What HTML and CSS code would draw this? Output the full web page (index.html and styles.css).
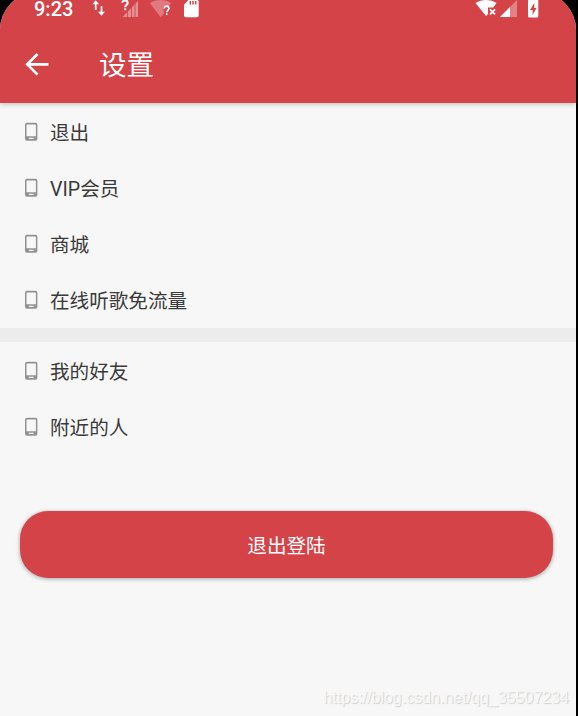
FILE: index.html
```html
<!DOCTYPE html>
<html lang="zh-CN">
<head>
<meta charset="utf-8">
<title>设置</title>
<link rel="stylesheet" href="styles.css">
</head>
<body>
<svg class="defs" width="0" height="0" aria-hidden="true">
  <symbol id="phone" viewBox="0 0 14 20">
    <path fill="#929292" fill-rule="evenodd" d="M3 .7h8.400a2 2 0 0 1 2 2v14a2 2 0 0 1-2 2H3a2 2 0 0 1-2-2v-14a2 2 0 0 1 2-2zM3.300 2.400a.8.8 0 0 0-.8.800V14.200h9.400V3.200a.8.8 0 0 0-.8-.8zM4.800 15.700v1.200h4.800v-1.200z"/>
  </symbol>
</svg>
<div class="screen">
  <header class="top">
    <div class="status">
      <span class="clock">9:23</span>
      <svg class="status-icons" width="490" height="22" viewBox="80 0 490 22">
        <g stroke="#fff" stroke-width="1.700" fill="none">
          <path d="M95.700 10V2M101.500 6v8"/>
        </g>
        <path fill="#fff" d="M92.300 4.300L95.700.3l3.400 4zM98 11.700h7l-3.500 4z"/>
        <path fill="#e48f93" d="M122.500 17L138 1v16z"/>
        <path stroke="#d34348" stroke-width=".8" d="M127.500 9v8M131.500 6v11M135 3v14"/>
        <path fill="#d34348" d="M120 0h9v10h-9z"/>
        <path d="M122.300 2.800c0-3.200 5.400-3.200 5.400.1 0 2-2.500 2-2.500 4.300M125.200 8.300v1.900" stroke="#fff" stroke-width="2" fill="none"/>
        <path fill="#e07a7e" d="M150 3.200C155-1 166-1 171 3.200L168.800 6h-5v8l-3.300 3z"/>
        <path d="M164.400 8.400c0-3 4.500-3 4.500.1 0 1.800-2.200 1.800-2.200 3.800M166.700 13.300v1.800" stroke="#fff" stroke-width="1.600" fill="none"/>
        <path fill="#fff" d="M188.500 0H197a1.700 1.700 0 0 1 1.700 1.700v13.800a1.700 1.700 0 0 1-1.700 1.700h-11.300a1.700 1.700 0 0 1-1.700-1.700V4.500z"/>
        <path stroke="#d34348" stroke-width="1.500" d="M190.300 1v3.600M193 1v3.600M195.700 1v3.600"/>
        <path fill="#fff" d="M475.500 3C481-1 491-1 496.500 3l-3.300 4.500H488V14l-2 2z"/>
        <path stroke="#fff" stroke-width="1.700" d="M490 9.300l5 5M495 9.300l-5 5"/>
        <path fill="#e38286" d="M500 17L517 0v17z"/>
        <path fill="#fff" d="M500 17l10-10v10z"/>
        <path fill="#fff" d="M528 0h10.300v16a1.500 1.500 0 0 1-1.500 1.500h-7.300A1.500 1.500 0 0 1 528 16z"/>
        <path fill="#d34348" d="M534.300 3L530 10h2.600v5L536.500 8h-2.200z"/>
      </svg>
    </div>
    <div class="appbar">
      <svg class="back" width="24" height="24" viewBox="0 0 24 24"><path d="M23.500 12.300H2M12.500 2L2.200 12.300l10.300 10.300" fill="none" stroke="#fff" stroke-width="2.700"/></svg>
      <h1 class="title">设置</h1>
    </div>
  </header>
  <main>
    <ul class="list">
      <li class="row"><svg class="phone"><use href="#phone"/></svg><span class="label">退出</span></li>
      <li class="row"><svg class="phone"><use href="#phone"/></svg><span class="label">VIP会员</span></li>
      <li class="row"><svg class="phone"><use href="#phone"/></svg><span class="label">商城</span></li>
      <li class="row"><svg class="phone"><use href="#phone"/></svg><span class="label">在线听歌免流量</span></li>
    </ul>
    <div class="divider"></div>
    <ul class="list">
      <li class="row"><svg class="phone"><use href="#phone"/></svg><span class="label">我的好友</span></li>
      <li class="row"><svg class="phone"><use href="#phone"/></svg><span class="label">附近的人</span></li>
    </ul>
    <button class="logout">退出登陆</button>
  </main>
  <div class="watermark">https://blog.csdn.net/qq_35507234</div>
</div>
</body>
</html>
```
FILE: styles.css
```css
* { box-sizing: border-box; }
html, body { margin: 0; height: 716px; overflow: hidden; background: #000; }
body { font-family: Roboto, "Noto Sans CJK SC", sans-serif; }
.defs { position: absolute; }
.screen {
  position: relative;
  width: 576px;
  height: 724px;
  margin-top: -8px;
  border-radius: 38px 38px 0 0;
  overflow: hidden;
  background: #f7f7f7;
}
.top {
  height: 111px;
  padding-top: 8px;
  background: #d34348;
  box-shadow: 0 1px 5px rgba(0, 0, 0, .25);
}
.status { display: flex; height: 25px; padding-left: 34px; }
.clock {
  width: 46px;
  font-size: 20px;
  font-weight: 500;
  line-height: 18px;
  color: #fff;
}
.status-icons { flex: none; display: block; }
.appbar { display: flex; align-items: center; height: 78px; padding-left: 25px; }
.back { display: block; flex: none; }
.title {
  margin: 0 0 0 50px;
  padding-top: 4px;
  font-size: 27.500px;
  font-weight: 400;
  line-height: 40px;
  color: #fff;
}
.list { margin: 0; padding: 0; list-style: none; }
.list:first-child { padding-top: 1px; }
.row {
  display: flex;
  align-items: center;
  height: 56px;
  padding-left: 24px;
  font-size: 19.600px;
  line-height: 28px;
  color: #3a3a3a;
}
.label { padding-top: 4px; }
.phone { width: 14px; height: 20px; margin-right: 12px; flex: none; }
.divider { height: 14px; margin-bottom: 1px; background: #ececec; }
.logout {
  display: block;
  width: 533px;
  height: 67px;
  margin: 56px 0 0 20px;
  padding: 4px 0 0;
  border: 0;
  border-radius: 28px;
  background: #d34348;
  box-shadow: 0 1px 4px rgba(0, 0, 0, .35);
  font: 400 19.600px/28px Roboto, "Noto Sans CJK SC", sans-serif;
  color: #fff;
}
.watermark {
  position: absolute;
  right: 7px;
  bottom: 8px;
  font: 16px/20px "Liberation Sans", sans-serif;
  color: #f7f7f7;
  text-shadow: 1px 1px 1px #d0d0d0;
}
```
